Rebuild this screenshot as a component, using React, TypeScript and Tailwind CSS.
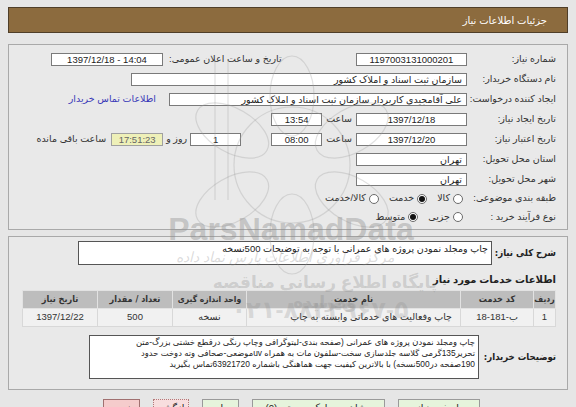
import React from 'react';

function Label({ children, className = '' }: { children: React.ReactNode; className?: string }) {
  return (
    <div className={`w-[100px] shrink-0 whitespace-nowrap pr-[11px] text-[9.5px] text-[#333] ${className}`}>
      {children}
    </div>
  );
}

function Field({
  children,
  className = '',
  center = false,
}: {
  children?: React.ReactNode;
  className?: string;
  center?: boolean;
}) {
  return (
    <div
      dir={center ? 'ltr' : 'rtl'}
      className={`h-[13px] shrink-0 overflow-hidden whitespace-nowrap border border-[#7a7a7a] bg-white px-[4px] text-[9.5px] leading-[11px] text-[#222] ${
        center ? 'text-center' : 'text-right'
      } ${className}`}
    >
      {children}
    </div>
  );
}

function Radio({ checked = false }: { checked?: boolean }) {
  return (
    <span className="flex h-[10px] w-[10px] shrink-0 items-center justify-center rounded-full border border-[#6b6b6b] bg-white">
      {checked && <span className="h-[6px] w-[6px] rounded-full bg-[#111]" />}
    </span>
  );
}

function Watermark() {
  return (
    <div className="pointer-events-none absolute inset-0 overflow-hidden">
      <svg className="absolute left-0 top-0" width="576" height="407" viewBox="0 0 576 407">
        <g fill="none" stroke="#9a9a9a" strokeOpacity="0.3" strokeWidth="1.2">
          <circle cx="292" cy="165" r="58" />
          <ellipse cx="292" cy="96" rx="22" ry="40" />
          <ellipse cx="292" cy="96" rx="22" ry="40" transform="rotate(60 292 165)" />
          <ellipse cx="292" cy="96" rx="22" ry="40" transform="rotate(120 292 165)" />
          <ellipse cx="292" cy="96" rx="22" ry="40" transform="rotate(180 292 165)" />
          <ellipse cx="292" cy="96" rx="22" ry="40" transform="rotate(240 292 165)" />
          <ellipse cx="292" cy="96" rx="22" ry="40" transform="rotate(300 292 165)" />
          <line x1="215" y1="60" x2="215" y2="200" />
          <line x1="228" y1="60" x2="228" y2="200" />
        </g>
      </svg>
      <div className="absolute left-[160px] top-[212px] w-[262px] text-center font-['Liberation_Sans',sans-serif] text-[32px] font-bold leading-[34px] text-[#8a8a8a]/40">
        ParsNamadData
      </div>
      <div dir="rtl" className="absolute left-[150px] top-[249px] w-[270px] text-center text-[14px] italic leading-[16px] text-[#8a8a8a]/30">
        مرکز فراوری اطلاعات پارس نماد داده
      </div>
      <div dir="rtl" className="absolute left-[190px] top-[273px] w-[270px] text-center text-[17px] font-bold leading-[20px] text-[#8a8a8a]/30">
        پایگاه اطلاع رسانی مناقصه ومزایده
      </div>
      <div dir="ltr" className="absolute left-[195px] top-[297px] w-[250px] text-center text-[24px] font-bold leading-[26px] text-[#8a8a8a]/25">
        ۰۲۱-۸۸۳۴۹۶۷-۵
      </div>
    </div>
  );
}

const condensed = "font-['DejaVu_Sans_Condensed','DejaVu_Sans',sans-serif]";

export default function App() {
  return (
    <div
      dir="rtl"
      className="relative h-[407px] w-[576px] overflow-hidden bg-[#e6e6e6] px-[8px] pt-[7px] font-['Liberation_Sans','DejaVu_Sans',sans-serif]"
    >
      <div className="flex h-[26px] items-center border border-[#4f3e28] bg-[#8c6b3e] pr-[20px] text-[10px] text-white">
        جزئیات اطلاعات نیاز
      </div>

      <div className="mt-[11px] border border-[#a9a9a9] bg-[#e9e9e9] pb-[3px] pt-[4px]">
        <div className="flex h-[20px] items-center">
          <Label>شماره نیاز:</Label>
          <Field center className="w-[111px]">1197003131000201</Field>
          <div className="w-[193px] shrink-0 whitespace-nowrap pl-[6px] text-left text-[9.5px] text-[#333]">
            تاریخ و ساعت اعلان عمومی:
          </div>
          <Field center className="w-[112px]">1397/12/18 - 14:04</Field>
        </div>

        <div className="flex h-[20px] items-center">
          <Label>نام دستگاه خریدار:</Label>
          <Field className="w-[336px]">سازمان ثبت اسناد و املاک کشور</Field>
        </div>

        <div className="flex h-[20px] items-center">
          <Label>ایجاد کننده درخواست:</Label>
          <Field className="w-[298px]">علی آقامجیدی کاربردار سازمان ثبت اسناد و املاک کشور</Field>
          <span className="mr-[13px] whitespace-nowrap text-[9.5px] text-[#3a3ab8]">اطلاعات تماس خریدار</span>
        </div>

        <div className="flex h-[20px] items-center">
          <Label>تاریخ ایجاد نیاز:</Label>
          <Field center className="w-[111px]">1397/12/18</Field>
          <span className="mx-[4px] text-[9.5px] text-[#333]">ساعت</span>
          <Field center className="w-[51px]">13:54</Field>
        </div>

        <div className="flex h-[20px] items-center">
          <Label>تاریخ اعتبار نیاز:</Label>
          <Field center className="w-[111px]">1397/12/20</Field>
          <span className="mx-[4px] text-[9.5px] text-[#333]">ساعت</span>
          <Field center className="w-[51px]">08:00</Field>
          <Field center className="mr-[30px] w-[51px]">1</Field>
          <span className="mx-[3px] whitespace-nowrap text-[9.5px] text-[#333]">روز و</span>
          <div
            dir="ltr"
            className="h-[13px] w-[52px] shrink-0 border border-[#a0a0a0] bg-[#eef0b8] text-center text-[9.5px] leading-[11px] text-[#666]"
          >
            17:51:23
          </div>
          <span className="mr-[5px] whitespace-nowrap text-[9.5px] text-[#333]">ساعت باقی مانده</span>
        </div>

        <div className="flex h-[20px] items-center">
          <Label>استان محل تحویل:</Label>
          <Field className="w-[111px]">تهران</Field>
        </div>

        <div className="flex h-[20px] items-center">
          <Label>شهر محل تحویل:</Label>
          <Field className="w-[111px]">تهران</Field>
        </div>

        <div className="flex h-[19px] items-center text-[9.5px] text-[#333]">
          <Label>طبقه بندی موضوعی:</Label>
          <div className="mr-[4px] flex items-center gap-[3px]">
            <Radio />
            <span>کالا</span>
          </div>
          <div className="mr-[10px] flex items-center gap-[3px]">
            <Radio checked />
            <span>خدمت</span>
          </div>
          <div className="mr-[10px] flex items-center gap-[3px]">
            <Radio />
            <span>کالا/خدمت</span>
          </div>
        </div>

        <div className="flex h-[18px] items-center text-[9.5px] text-[#333]">
          <Label>نوع فرآیند خرید :</Label>
          <div className="mr-[4px] flex items-center gap-[3px]">
            <Radio />
            <span>جزیی</span>
          </div>
          <div className="mr-[10px] flex items-center gap-[3px]">
            <Radio checked />
            <span>متوسط</span>
          </div>
        </div>
      </div>

      <div className="mt-[6px] border border-[#a9a9a9] bg-[#e9e9e9] pb-[10px] pt-[4px]">
        <div className="flex items-start">
          <div className={`w-[75px] shrink-0 whitespace-nowrap pr-[11px] pt-[5px] text-[9.5px] font-bold text-[#222] ${condensed}`}>
            شرح کلی نیاز:
          </div>
          <div className="h-[24px] w-[414px] shrink-0 whitespace-nowrap border border-[#555] bg-white px-[3px] pt-[1px] text-[9.5px] leading-[11px] text-[#222]">
            چاپ ومجلد نمودن پروژه های عمرانی با توجه به توضیحات 500نسخه
          </div>
        </div>

        <div className="mr-[11px] mt-[8px] whitespace-nowrap text-[10px] font-bold leading-[14px] text-[#222]">
          اطلاعات خدمات مورد نیاز
        </div>

        <table className="mr-[11px] mt-[3px] w-[533px] table-fixed border-collapse border border-[#d4d4d4] text-[9px] text-[#333]">
          <colgroup>
            <col className="w-[22px]" />
            <col className="w-[73px]" />
            <col className="w-[214px]" />
            <col className="w-[74px]" />
            <col className="w-[75px]" />
            <col className="w-[75px]" />
          </colgroup>
          <thead className={condensed}>
            <tr className="h-[18px] bg-[#bdbdbd]">
              <th className="overflow-hidden whitespace-nowrap border border-[#e2e2e2] text-[8.5px] font-bold">ردیف</th>
              <th className="whitespace-nowrap border border-[#e2e2e2] font-bold">کد خدمت</th>
              <th className="whitespace-nowrap border border-[#e2e2e2] font-bold">نام خدمت</th>
              <th className="whitespace-nowrap border border-[#e2e2e2] text-[8.5px] font-bold">واحد اندازه گیری</th>
              <th className="whitespace-nowrap border border-[#e2e2e2] font-bold">تعداد / مقدار</th>
              <th className="whitespace-nowrap border border-[#e2e2e2] font-bold">تاریخ نیاز</th>
            </tr>
          </thead>
          <tbody>
            <tr className="h-[18px] bg-[#f1f1f1] text-[9.5px]">
              <td className="border border-[#d8d8d8] text-center">1</td>
              <td className="border border-[#d8d8d8] text-center">ب-181-18</td>
              <td className="whitespace-nowrap border border-[#d8d8d8] pr-[8px] text-right">چاپ وفعالیت های خدماتی وابسته به چاپ</td>
              <td className="border border-[#d8d8d8] text-center">نسخه</td>
              <td className="border border-[#d8d8d8] text-center">500</td>
              <td className="border border-[#d8d8d8] text-center">1397/12/22</td>
            </tr>
          </tbody>
        </table>

        <div className="mt-[8px] flex items-center">
          <div className={`w-[88px] shrink-0 whitespace-nowrap pr-[11px] text-[9.5px] font-bold text-[#222] ${condensed}`}>
            توضیحات خریدار:
          </div>
          <div className="h-[44px] w-[390px] shrink-0 overflow-hidden whitespace-nowrap border border-[#555] bg-white px-[3px] pt-[1px] text-[8.4px] leading-[11px] text-[#222]">
            <div>چاپ ومجلد نمودن پروژه های عمرانی (صفحه بندی-لیتوگرافی وچاپ رنگی درقطع خشتی بزرگ-متن</div>
            <div>تحریر135گرمی گلاسه  جلدسازی سخت-سلفون مات به همراه uvموضعی-صحافی وته دوخت حدود</div>
            <div>190صفحه در500نسخه) با بالاترین کیفیت جهت هماهنگی باشماره 63921720تماس بگیرید</div>
          </div>
        </div>
      </div>

      <div className="mr-[88px] mt-[9px] flex gap-[13px] whitespace-nowrap text-[9.5px] text-[#222]">
        <button className="h-[18px] w-[82px] shrink-0 border border-[#9a9a9a] bg-[#e6f4dc]">پاسخ به نیاز</button>
        <button className="h-[18px] w-[133px] shrink-0 border border-[#9a9a9a] bg-[#e6f4dc]">مشاهده مدارک پیوستی (0)</button>
        <button className="h-[18px] w-[37px] shrink-0 border border-[#9a9a9a] bg-[#e6f4dc]">چاپ</button>
        <button className="h-[18px] w-[36px] shrink-0 border border-dotted border-[#b07a7a] bg-[#f8dede]">بازگشت</button>
        <button className="h-[18px] w-[37px] shrink-0 border border-[#a07070] bg-[#f5cccc]">خروج</button>
      </div>

      <Watermark />
    </div>
  );
}
